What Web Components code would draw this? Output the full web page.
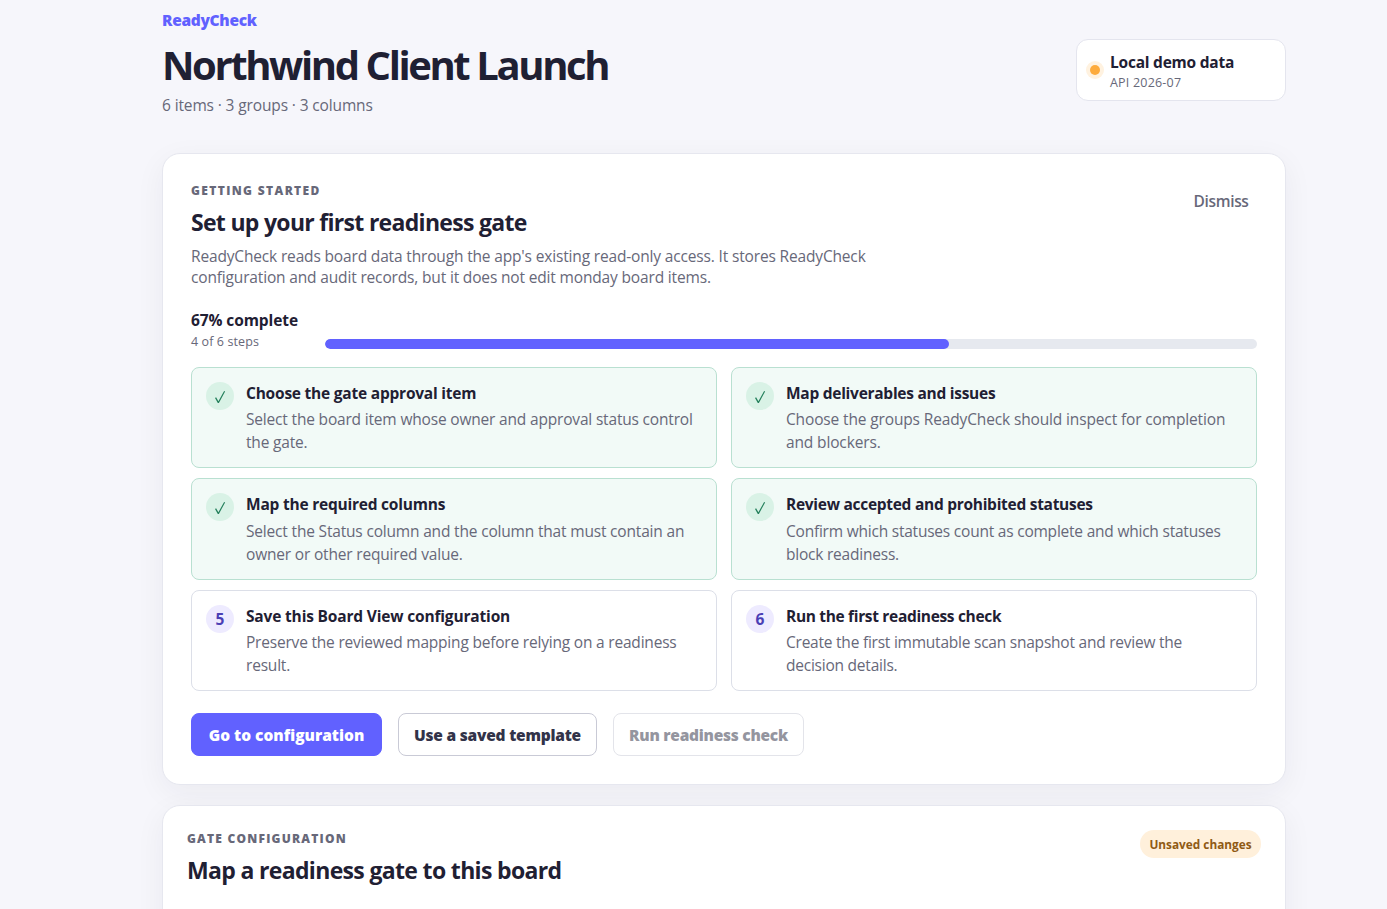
<!DOCTYPE html>
<html lang="en">
<head>
<meta charset="utf-8">
<title>ReadyCheck</title>
<style>
  html {
    height: 100%;
    overflow: hidden;
  }
  body {
    margin: 0;
    height: 100%;
    overflow: hidden;
    background: #f6f6fb;
    color: #1f2033;
    font: 15.5px/22px "Open Sans", "Noto Sans", sans-serif;
    --muted: #676879;
    --accent: #6161ff;
  }
</style>
</head>
<body>
<ready-check-app></ready-check-app>

<script>
class BoardHeader extends HTMLElement {
  constructor() {
    super();
    this.attachShadow({ mode: 'open' });
    this.shadowRoot.innerHTML = `
      <style>
        :host {
          display: flex;
          justify-content: space-between;
          align-items: flex-start;
          height: 116px;
        }
        .brand {
          color: var(--accent);
          font-weight: 900;
          letter-spacing: -0.31px;
        }
        h1 {
          margin: 11px 0 6px;
          font-size: 40px;
          line-height: 46px;
          font-weight: 700;
          letter-spacing: -2.4px;
          white-space: nowrap;
        }
        .summary {
          color: var(--muted);
          letter-spacing: -0.13px;
        }
      </style>
      <div>
        <div class="brand">ReadyCheck</div>
        <h1><slot></slot></h1>
        <div class="summary"><slot name="summary"></slot></div>
      </div>
      <slot name="status"></slot>
    `;
  }
}
customElements.define('board-header', BoardHeader);

class StatusChip extends HTMLElement {
  constructor() {
    super();
    this.attachShadow({ mode: 'open' });
    this.shadowRoot.innerHTML = `
      <style>
        :host {
          display: flex;
          align-items: center;
          gap: 10px;
          box-sizing: border-box;
          width: 210px;
          height: 62px;
          padding: 0 13px;
          margin-top: 30px;
          background: #fff;
          border: 1px solid #e4e5ee;
          border-radius: 12px;
        }
        .dot {
          width: 10px;
          height: 10px;
          border-radius: 50%;
          background: #fdab3d;
          box-shadow: 0 0 0 4px #fff2e0;
        }
        strong {
          display: block;
          font-weight: 700;
          padding-top: 2px;
          letter-spacing: -0.23px;
        }
        small {
          display: block;
          font-size: 12.5px;
          line-height: 18px;
          margin-top: 1px;
          color: var(--muted);
          letter-spacing: 0.2px;
        }
      </style>
      <span class="dot"></span>
      <div>
        <strong><slot></slot></strong>
        <small><slot name="note"></slot></small>
      </div>
    `;
  }
}
customElements.define('status-chip', StatusChip);

class PanelCard extends HTMLElement {
  constructor() {
    super();
    this.attachShadow({ mode: 'open' });
    this.shadowRoot.innerHTML = `
      <style>
        :host {
          display: block;
          box-sizing: border-box;
          padding: 28px;
          background: #fff;
          border: 1px solid #e6e7ef;
          border-radius: 18px;
          box-shadow: 0 8px 30px rgba(41, 41, 61, 0.055);
        }
        header {
          display: flex;
          justify-content: space-between;
          align-items: flex-start;
        }
        .eyebrow {
          color: var(--muted);
          font-size: 12px;
          line-height: 18px;
          font-weight: 800;
          letter-spacing: var(--eyebrow-spacing, 1.37px);
        }
        h2 {
          margin: 6.5px 0 0;
          font-size: 23px;
          line-height: 30px;
          font-weight: 700;
          letter-spacing: var(--title-spacing, -0.7px);
        }
      </style>
      <header>
        <div>
          <div class="eyebrow"><slot name="eyebrow"></slot></div>
          <h2><slot name="title"></slot></h2>
          <slot name="intro"></slot>
        </div>
        <slot name="action"></slot>
      </header>
      <slot></slot>
    `;
  }
}
customElements.define('panel-card', PanelCard);

class SetupProgress extends HTMLElement {
  connectedCallback() {
    const done = Number(this.getAttribute('done'));
    const total = Number(this.getAttribute('total'));
    const percent = Math.round(done / total * 100);
    this.attachShadow({ mode: 'open' });
    this.shadowRoot.innerHTML = `
      <style>
        :host {
          display: flex;
          align-items: flex-end;
          height: 42px;
        }
        .label {
          width: 134px;
        }
        strong {
          display: block;
          letter-spacing: -0.09px;
        }
        small {
          display: block;
          font-size: 12.5px;
          line-height: 18px;
          margin-top: 2px;
          color: var(--muted);
          letter-spacing: 0.1px;
        }
        .track {
          flex: 1;
          height: 10px;
          margin-bottom: 2px;
          border-radius: 5px;
          background: #e6e9ef;
          overflow: hidden;
        }
        .bar {
          width: ${percent}%;
          height: 100%;
          border-radius: 5px;
          background: var(--accent);
        }
      </style>
      <div class="label">
        <strong>${percent}% complete</strong>
        <small>${done} of ${total} steps</small>
      </div>
      <div class="track"><div class="bar"></div></div>
    `;
  }
}
customElements.define('setup-progress', SetupProgress);

class SetupStep extends HTMLElement {
  connectedCallback() {
    const number = this.getAttribute('number');
    const check = `
      <svg width="12" height="14" viewBox="0 0 12 14">
        <path d="M1 7.9 L2.1 7.3 L4.4 11.2 L10.1 1 L11.1 1.4 L4.9 12.9 L3.8 12.9 Z" fill="#24805c"/>
      </svg>`;
    this.attachShadow({ mode: 'open' });
    this.shadowRoot.innerHTML = `
      <style>
        :host {
          display: flex;
          gap: 12px;
          box-sizing: border-box;
          padding: 14px;
          background: #fff;
          border: 1px solid #dcdfe8;
          border-radius: 8px;
        }
        :host([done]) {
          background: #f2faf7;
          border-color: #b9e0d1;
        }
        .marker {
          display: flex;
          flex: none;
          align-items: center;
          justify-content: center;
          width: 28px;
          height: 28px;
          border-radius: 50%;
          background: #eeebff;
          color: #4b3fb5;
          font-weight: 700;
        }
        :host([done]) .marker {
          background: #d9f2e6;
        }
        svg {
          margin-top: 1px;
        }
        h3 {
          margin: 0;
          font-size: 15.5px;
          line-height: 22px;
          font-weight: 700;
          letter-spacing: var(--title-spacing, -0.22px);
        }
        p {
          margin: 4.3px 0 0;
          line-height: 23px;
          color: var(--muted);
          letter-spacing: var(--text-spacing, -0.18px);
          white-space: nowrap;
        }
      </style>
      <span class="marker">${this.hasAttribute('done') ? check : number}</span>
      <div>
        <h3><slot name="title"></slot></h3>
        <p><slot></slot></p>
      </div>
    `;
  }
}
customElements.define('setup-step', SetupStep);

class ActionButton extends HTMLElement {
  constructor() {
    super();
    this.attachShadow({ mode: 'open' });
    this.shadowRoot.innerHTML = `
      <style>
        :host {
          display: block;
        }
        button {
          display: block;
          box-sizing: border-box;
          width: 100%;
          height: 43px;
          padding: 1px 0 0;
          font: inherit;
          font-weight: 900;
          letter-spacing: var(--text-spacing, -0.22px);
          white-space: nowrap;
          color: #323349;
          background: #fff;
          border: 1px solid #c9cad6;
          border-radius: 8px;
        }
        :host([primary]) button {
          color: #fff;
          background: var(--accent);
          border-color: var(--accent);
        }
        :host([disabled]) button {
          color: #94959f;
          border-color: #e3e4ea;
        }
        :host([plain]) button {
          font-weight: 600;
          color: var(--muted);
          border-color: transparent;
          background: none;
        }
      </style>
      <button type="button"><slot></slot></button>
    `;
  }
}
customElements.define('action-button', ActionButton);

class StateBadge extends HTMLElement {
  constructor() {
    super();
    this.attachShadow({ mode: 'open' });
    this.shadowRoot.innerHTML = `
      <style>
        :host {
          display: block;
          box-sizing: border-box;
          width: 121px;
          height: 28px;
          border-radius: 14px;
          background: #fff0db;
          color: #8f5a14;
          font-size: 11.8px;
          font-weight: 700;
          line-height: 29px;
          text-align: center;
          white-space: nowrap;
        }
      </style>
      <slot></slot>
    `;
  }
}
customElements.define('state-badge', StateBadge);

class ReadyCheckApp extends HTMLElement {
  constructor() {
    super();
    this.attachShadow({ mode: 'open' });
    this.shadowRoot.innerHTML = `
      <style>
        :host {
          display: block;
          box-sizing: border-box;
          width: 1286px;
          padding: 9px 0 0 162px;
        }
        .setup {
          height: 632px;
          margin-top: 28px;
        }
        .intro {
          margin: 9.5px 0 0;
          line-height: 21px;
          color: var(--muted);
          letter-spacing: -0.16px;
        }
        .dismiss {
          width: 72px;
          margin-top: -3px;
          --text-spacing: -0.32px;
        }
        setup-progress {
          margin-top: 21px;
        }
        .steps {
          display: grid;
          grid-template-columns: 1fr 1fr;
          grid-auto-rows: 101.4px;
          gap: 10px 14px;
          margin-top: 16px;
        }
        .actions {
          display: flex;
          gap: 16px;
          margin-top: 22px;
        }
        .configuration {
          height: 160px;
          margin-top: 20px;
          padding: 24px;
          --eyebrow-spacing: 1.22px;
          --title-spacing: -0.66px;
        }
      </style>
      <board-header>
        Northwind Client Launch
        <span slot="summary">6 items · 3 groups · 3 columns</span>
        <status-chip slot="status">Local demo data<span slot="note">API 2026-07</span></status-chip>
      </board-header>

      <panel-card class="setup">
        <span slot="eyebrow">GETTING STARTED</span>
        <span slot="title">Set up your first readiness gate</span>
        <p class="intro" slot="intro">ReadyCheck reads board data through the app's existing read-only access. It stores ReadyCheck<br>configuration and audit records, but it does not edit monday board items.</p>
        <action-button class="dismiss" slot="action" plain>Dismiss</action-button>

        <setup-progress done="4" total="6"></setup-progress>

        <div class="steps">
          <setup-step number="1" done>
            <span slot="title">Choose the gate approval item</span>
            Select the board item whose owner and approval status control<br>the gate.
          </setup-step>
          <setup-step number="2" done style="--title-spacing: -0.27px; --text-spacing: -0.14px">
            <span slot="title">Map deliverables and issues</span>
            Choose the groups ReadyCheck should inspect for completion<br>and blockers.
          </setup-step>
          <setup-step number="3" done>
            <span slot="title">Map the required columns</span>
            Select the Status column and the column that must contain an<br>owner or other required value.
          </setup-step>
          <setup-step number="4" done style="--title-spacing: -0.28px; --text-spacing: -0.22px">
            <span slot="title">Review accepted and prohibited statuses</span>
            Confirm which statuses count as complete and which statuses<br>block readiness.
          </setup-step>
          <setup-step number="5" style="--title-spacing: -0.17px; --text-spacing: -0.2px">
            <span slot="title">Save this Board View configuration</span>
            Preserve the reviewed mapping before relying on a readiness<br>result.
          </setup-step>
          <setup-step number="6" style="--title-spacing: -0.33px; --text-spacing: -0.23px">
            <span slot="title">Run the first readiness check</span>
            Create the first immutable scan snapshot and review the<br>decision details.
          </setup-step>
        </div>

        <div class="actions">
          <action-button primary style="width: 191px; --text-spacing: 0">Go to configuration</action-button>
          <action-button style="width: 199px">Use a saved template</action-button>
          <action-button disabled style="width: 191px; --text-spacing: -0.26px">Run readiness check</action-button>
        </div>
      </panel-card>

      <panel-card class="configuration">
        <span slot="eyebrow">GATE CONFIGURATION</span>
        <span slot="title">Map a readiness gate to this board</span>
        <state-badge slot="action">Unsaved changes</state-badge>
      </panel-card>
    `;
  }
}
customElements.define('ready-check-app', ReadyCheckApp);
</script>
</body>
</html>
